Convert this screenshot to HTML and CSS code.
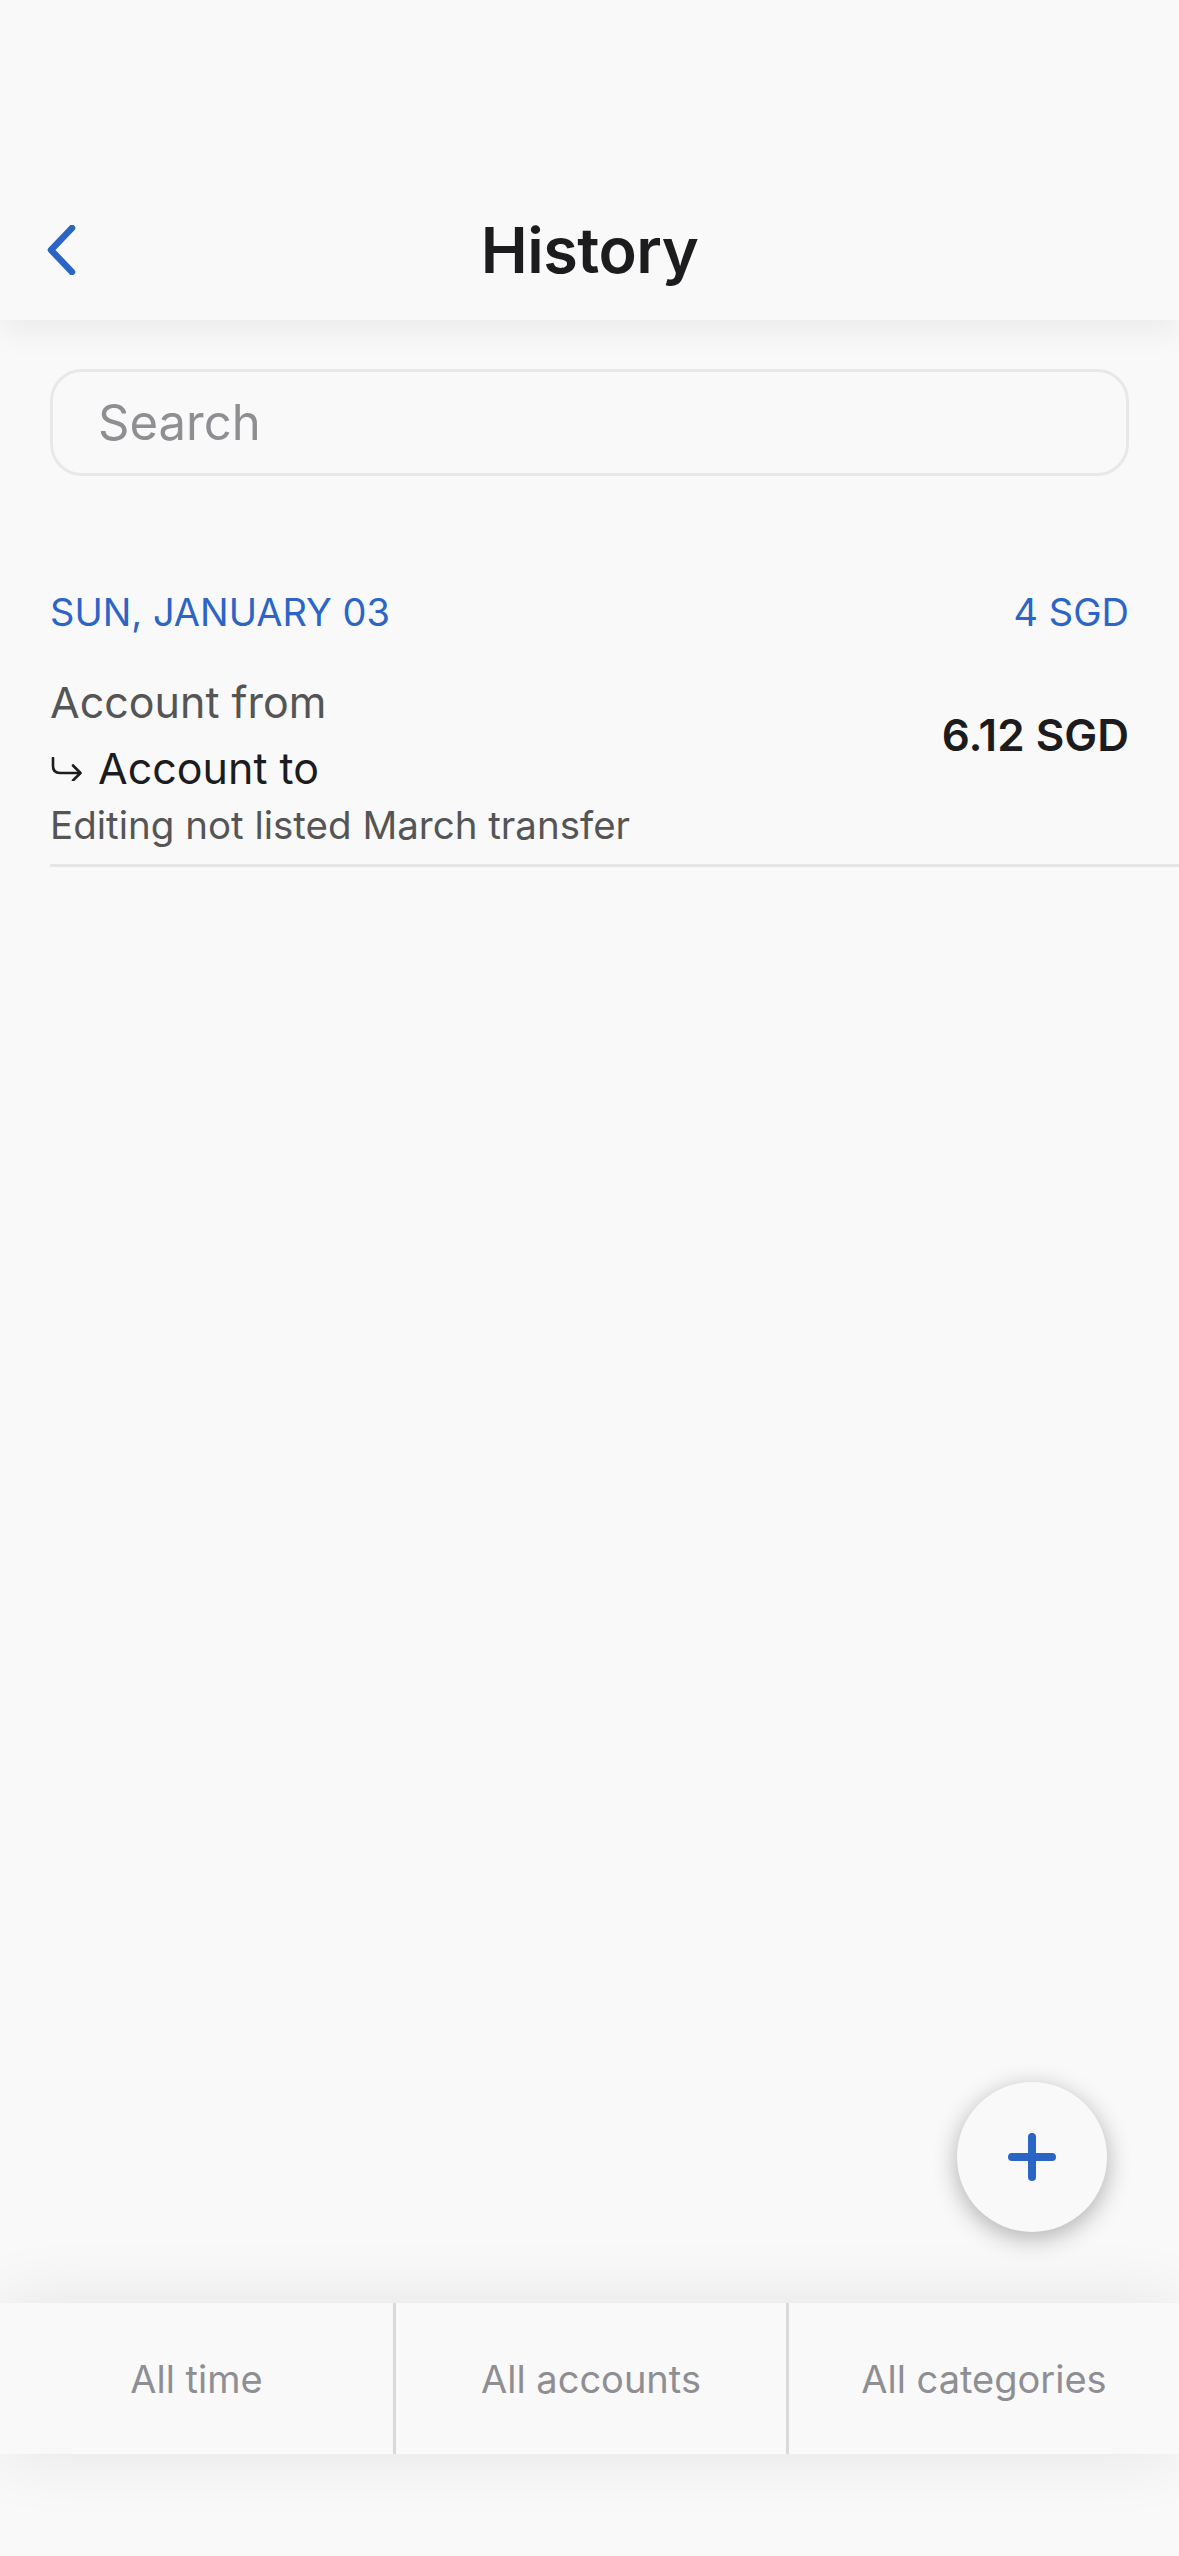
FILE: index.html
```html
<!DOCTYPE html>
<html>
<head>
<meta charset="utf-8">
<link rel="stylesheet" href="styles.css">
</head>
<body>
<div class="screen">
  <header class="header">
    <div class="nav">
      <div class="nav-left">
        <svg class="back" width="30" height="50" viewBox="0 0 30 50"><polyline points="26,3 5,25 26,47" fill="none" stroke="#2a64c5" stroke-width="6.5" stroke-linecap="round" stroke-linejoin="round"/></svg>
      </div>
      <h1 class="title">History</h1>
      <div class="nav-right"></div>
    </div>
  </header>
  <main class="content">
    <div class="search">
      <span class="search-placeholder">Search</span>
    </div>
    <div class="section-head">
      <span>SUN, JANUARY 03</span>
      <span>4 SGD</span>
    </div>
    <div class="row">
      <div class="row-main">
        <div class="from">Account from</div>
        <div class="to">
          <svg class="hook" width="34" height="24" viewBox="0 0 34 24"><path d="M3 1 V9 Q3 16 10 16 H30" fill="none" stroke="#1c1c1e" stroke-width="2.6" stroke-linecap="round"/><path d="M23 8.5 L30.5 16 L23 23.5" fill="none" stroke="#1c1c1e" stroke-width="2.6" stroke-linecap="round" stroke-linejoin="round"/></svg>
          <span>Account to</span>
        </div>
        <div class="note">Editing not listed March transfer</div>
      </div>
      <div class="amount">6.12 SGD</div>
    </div>
    <button class="fab" aria-label="Add">
      <svg width="50" height="50" viewBox="0 0 50 50"><path d="M25 5 V45 M5 25 H45" stroke="#2a64c5" stroke-width="8" stroke-linecap="round"/></svg>
    </button>
  </main>
  <nav class="filters">
    <div class="filter">All time</div>
    <div class="filter">All accounts</div>
    <div class="filter">All categories</div>
  </nav>
  <div class="safe"></div>
</div>
</body>
</html>
```
FILE: styles.css
```css
* { box-sizing: border-box; }
html, body { margin: 0; padding: 0; }
body {
  background: #f9f9f9;
  font-family: "Inter", "Noto Sans", sans-serif;
  color: #1c1c1e;
}
.screen {
  width: 1179px;
  height: 2556px;
  display: flex;
  flex-direction: column;
  overflow: hidden;
}
.header {
  height: 320px;
  padding-top: 180px;
  background: #f9f9f9;
  box-shadow: 0 12px 30px rgba(0,0,0,0.06);
  position: relative;
  z-index: 2;
}
.nav {
  height: 140px;
  display: grid;
  grid-template-columns: 1fr auto 1fr;
  align-items: center;
}
.nav-left {
  padding-left: 46px;
  display: flex;
  align-items: center;
}
.back { display: block; }
.title {
  margin: 0;
  font-size: 63px;
  font-weight: 600;
  letter-spacing: -0.5px;
  color: #1c1c1e;
}
.content {
  flex: 1;
  position: relative;
  padding-top: 49px;
}
.search {
  margin: 0 50px;
  height: 107px;
  border: 3px solid #e8e8e8;
  border-radius: 32px;
  display: flex;
  align-items: center;
  padding-left: 45px;
}
.search-placeholder {
  font-size: 49px;
  color: #8e8e93;
}
.section-head {
  margin: 112px 50px 0;
  display: flex;
  justify-content: space-between;
  font-size: 38px;
  line-height: 48px;
  color: #2c65c6;
}
.row {
  margin-top: 33px;
  margin-left: 50px;
  padding-right: 50px;
  padding-bottom: 15px;
  border-bottom: 3px solid #e6e6e6;
  display: flex;
  justify-content: space-between;
  align-items: flex-start;
}
.from {
  font-size: 43px;
  line-height: 66px;
  color: #555555;
}
.to {
  font-size: 43px;
  line-height: 66px;
  color: #1c1c1e;
  display: flex;
  align-items: center;
  gap: 14px;
}
.hook { display: block; margin-top: 2px; }
.note {
  font-size: 38.5px;
  line-height: 48px;
  color: #555555;
}
.amount {
  padding-top: 40px;
  font-size: 44px;
  line-height: 52px;
  font-weight: 600;
  color: #1c1c1e;
}
.fab {
  position: absolute;
  right: 72px;
  bottom: 71px;
  width: 150px;
  height: 150px;
  border-radius: 50%;
  border: none;
  background: #f9f9f9;
  box-shadow: 0 6px 24px rgba(0,0,0,0.3);
  display: flex;
  align-items: center;
  justify-content: center;
  padding: 0;
}
.filters {
  height: 151px;
  display: grid;
  grid-template-columns: 1fr 1fr 1fr;
  background: #f9f9f9;
  box-shadow: 0 0 70px rgba(0,0,0,0.09);
  position: relative;
  z-index: 1;
}
.filter {
  display: flex;
  align-items: center;
  justify-content: center;
  font-size: 38px;
  color: #8e8e93;
  border-left: 3px solid #d9d9d9;
}
.filter:first-child { border-left: none; }
.safe {
  height: 102px;
  background: #f9f9f9;
}
```
